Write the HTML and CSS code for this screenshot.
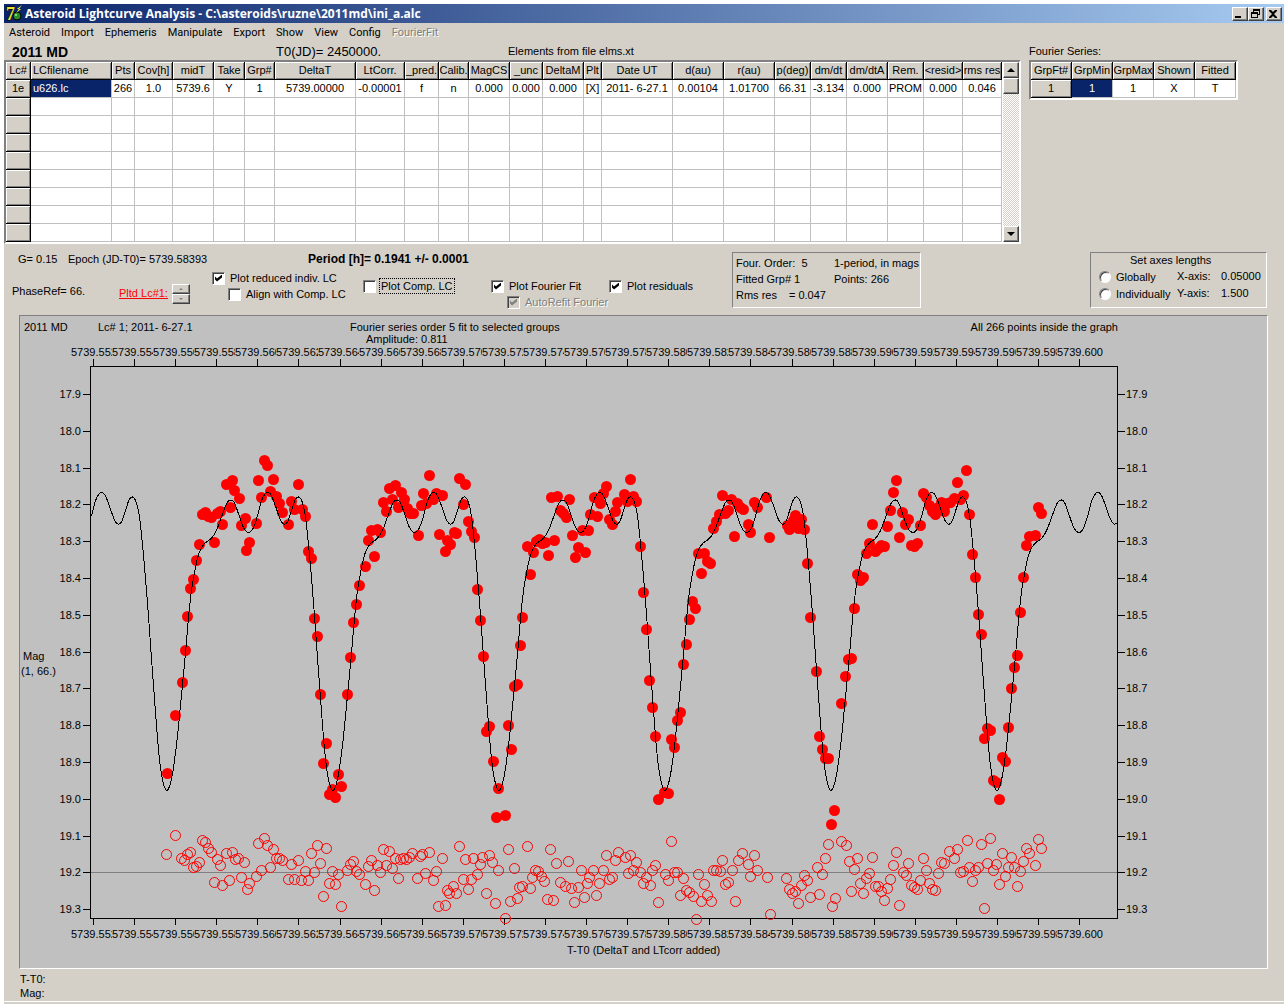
FILE: index.html
```html
<!DOCTYPE html>
<html lang="en">
<head>
  <meta charset="UTF-8">
  <title>Asteroid Lightcurve Analysis</title>
  <link rel="stylesheet" href="styles.css">
</head>
<body>
  <div class="window">
    <header class="titlebar">
      <svg class="app-icon" viewBox="0 0 18 18" width="18" height="18">
        <text class="icon-seven" x="1" y="15">7</text>
        <circle cx="12" cy="11" r="4" fill="#2a8c2a" stroke="#000"/>
        <circle cx="11" cy="10" r="1" fill="#8f8"/>
        <path d="M17 0l-5 4h2l-3 4 5-4h-2z" fill="#ffff30"/>
      </svg>
      <h1>Asteroid Lightcurve Analysis - C:\asteroids\ruzne\2011md\ini_a.alc</h1>
      <div class="caption-buttons">
        <button aria-label="Minimize"><svg viewBox="0 0 12 10" width="12" height="10"><path d="M2 8h6v2H2z"/></svg></button>
        <button aria-label="Restore"><svg viewBox="0 0 12 10" width="12" height="10"><path d="M4 1h7v6H9V6h1V3H5v1H4zM2 4h7v6H2zM3 6v3h5V6z" fill-rule="evenodd"/></svg></button>
        <button class="close" aria-label="Close"><svg viewBox="0 0 12 10" width="12" height="10"><path d="M2 2h2l2 2 2-2h2v1L7 6l3 3v1H8L6 8l-2 2H2V9l3-3-3-3z"/></svg></button>
      </div>
    </header>

    <nav class="menu">
      <button>Asteroid</button>
      <button>Import</button>
      <button>Ephemeris</button>
      <button>Manipulate</button>
      <button>Export</button>
      <button>Show</button>
      <button>View</button>
      <button>Config</button>
      <button disabled>FourierFit</button>
    </nav>

    <div class="tables">
      <section class="lc-section">
        <div class="lc-head">
          <b class="object">2011 MD</b>
          <span class="epoch0">T0(JD)= 2450000.</span>
          <span>Elements from file elms.xt</span>
        </div>
        <div class="sunken">
          <table id="lcTable" class="grid">
            <thead><tr></tr></thead>
            <tbody></tbody>
          </table>
          <div class="scrollbar">
            <button aria-label="Scroll up"><i class="up"></i></button>
            <div class="thumb"></div>
            <div class="track"></div>
            <button aria-label="Scroll down"><i class="down"></i></button>
          </div>
        </div>
      </section>

      <section class="fs-section">
        <div class="fs-head">Fourier Series:</div>
        <div class="sunken">
          <table class="grid fs">
            <thead>
              <tr><th>GrpFt#</th><th>GrpMin</th><th>GrpMax</th><th>Shown</th><th>Fitted</th></tr>
            </thead>
            <tbody>
              <tr><th>1</th><td class="selected">1</td><td>1</td><td>X</td><td>T</td></tr>
            </tbody>
          </table>
        </div>
      </section>
    </div>

    <div class="controls">
      <div class="options">
        <div class="params">
          <span>G= 0.15</span>
          <span>Epoch (JD-T0)= 5739.58393</span>
          <b>Period [h]= 0.1941 +/- 0.0001</b>
        </div>
        <div class="checks">
          <span class="phase">PhaseRef= 66.</span>
          <div class="plotted">
            <a href="#">Pltd Lc#1:</a>
            <div class="spinner">
              <button aria-label="Next"><i class="up"></i></button>
              <button aria-label="Previous"><i class="down"></i></button>
            </div>
          </div>
          <div class="check-col high">
            <label><input type="checkbox" checked><span>Plot reduced indiv. LC</span></label>
            <label class="indent"><input type="checkbox"><span>Align with Comp. LC</span></label>
          </div>
          <div class="check-col">
            <label><input type="checkbox"><span class="focused">Plot Comp. LC</span></label>
          </div>
          <div class="check-col">
            <label><input type="checkbox" checked><span>Plot Fourier Fit</span></label>
            <label class="indent"><input type="checkbox" checked disabled><span>AutoRefit Fourier</span></label>
          </div>
          <div class="check-col">
            <label><input type="checkbox" checked><span>Plot residuals</span></label>
          </div>
        </div>
      </div>

      <div class="panel fit-info">
        <span>Four. Order:&nbsp; 5</span><span>1-period, in mags</span>
        <span>Fitted Grp# 1</span><span>Points: 266</span>
        <span class="rms">Rms res <em>= 0.047</em></span>
      </div>

      <div class="panel axes">
        <div class="axes-title">Set axes lengths</div>
        <label><input type="radio" name="axes"><span>Globally</span></label>
        <span>X-axis:</span><span>0.05000</span>
        <label><input type="radio" name="axes"><span>Individually</span></label>
        <span>Y-axis:</span><span>1.500</span>
      </div>
    </div>

    <div class="chart">
      <svg id="plot" viewBox="20 316 1247 652">
        <text x="24" y="331">2011 MD</text>
        <text x="98" y="331">Lc# 1; 2011- 6-27.1</text>
        <text x="350" y="331">Fourier series order 5 fit to selected groups</text>
        <text x="366" y="343">Amplitude: 0.811</text>
        <text x="1118" y="331" class="end">All 266 points inside the graph</text>
        <text x="23" y="660">Mag</text>
        <text x="21" y="675">(1, 66.)</text>
        <text x="567" y="954">T-T0 (DeltaT and LTcorr added)</text>
        <g id="axes"></g>
        <g id="residuals"></g>
        <g id="points"></g>
        <path id="fit"></path>
      </svg>
    </div>

    <footer class="status">
      <div>T-T0:</div>
      <div>Mag:</div>
    </footer>
  </div>

  <script src="script.js"></script>
</body>
</html>
```
FILE: styles.css
```css
* {
  box-sizing: border-box;
}
body {
  margin: 0;
  padding: 4px 4px 0;
  background: #fff;
  color: #000;
  font: 11px/14px "Liberation Sans", Arial, sans-serif;
}
.window {
  background: #d4d0c8;
  border-bottom: 2px solid #d4d0c8;
}
button {
  padding: 0;
  color: inherit;
  font: inherit;
}

/* title bar */
.titlebar {
  display: flex;
  align-items: center;
  height: 19px;
  padding: 0 2px 0 1px;
  background: linear-gradient(to right, #0a246a, #a6caf0);
  color: #fff;
}
.icon-seven {
  font: bold 18px "Liberation Serif", serif;
  fill: #e8e030;
  stroke: #000;
  stroke-width: 1px;
  paint-order: stroke;
}
.titlebar h1 {
  flex: 1;
  margin: 0 0 0 2px;
  font: bold 12px/18px "Open Sans", Tahoma, sans-serif;
}
.caption-buttons {
  display: flex;
}
.caption-buttons button {
  display: flex;
  width: 16px;
  height: 14px;
  border: 1px solid;
  border-color: #fff #404040 #404040 #fff;
  background: #d4d0c8;
  box-shadow: inset -1px -1px #808080;
}
.caption-buttons .close {
  margin-left: 2px;
}

/* menu */
.menu {
  display: flex;
  gap: 11px;
  height: 20px;
  padding-left: 5px;
}
.menu button {
  border: 0;
  background: none;
  font: 11px/20px Roboto, Tahoma, sans-serif;
}
.menu button:disabled {
  color: #808080;
  text-shadow: 1px 1px #fff;
}

/* tables */
.tables {
  display: flex;
  gap: 8px;
}
.lc-head {
  display: grid;
  grid-template-columns: 264px 232px 1fr;
  height: 17px;
  padding-left: 8px;
  line-height: 16px;
}
.object {
  font-size: 14px;
  line-height: 18px;
}
.epoch0 {
  font-size: 13px;
  line-height: 18px;
}
.fs-head {
  height: 17px;
  line-height: 16px;
}
.sunken {
  display: flex;
  border: 2px solid;
  border-color: #808080 #fff #fff #808080;
  background: #fff;
}
.grid {
  table-layout: fixed;
  border-spacing: 0;
  width: 996px;
}
.grid.fs {
  width: 205px;
}
.grid tr {
  height: 18px;
}
.grid th, .grid td {
  padding: 0;
  border: solid #c0c0c0;
  border-width: 0 1px 1px 0;
  font-weight: normal;
  line-height: 17px;
  text-align: center;
  white-space: nowrap;
  overflow: hidden;
}
.grid th {
  border-color: #000;
  background: #d4d0c8;
  box-shadow: inset 1px 1px #fff, inset -1px -1px #808080;
}
.grid .left {
  padding-left: 2px;
  text-align: left;
}
.grid .selected {
  background: #0a246a;
  color: #fff;
}
.scrollbar {
  display: flex;
  flex-direction: column;
  width: 16px;
  margin-left: 1px;
}
.scrollbar button, .thumb, .spinner button {
  display: flex;
  align-items: center;
  justify-content: center;
  height: 16px;
  border: 1px solid;
  border-color: #fff #404040 #404040 #fff;
  background: #d4d0c8;
  box-shadow: inset -1px -1px #808080;
}
.track {
  flex: 1;
  background: repeating-conic-gradient(#fff 0 25%, #d4d0c8 0 50%) 0 0 / 2px 2px;
}
.up, .down {
  border: 4px solid transparent;
  border-top-width: 0;
  border-bottom-color: #000;
}
.down {
  border-width: 4px 4px 0;
  border-top-color: #000;
}

/* controls */
.controls {
  display: flex;
  height: 71px;
  padding: 8px 17px 7px 8px;
}
.params {
  display: flex;
  height: 18px;
  padding-left: 6px;
}
.params span:first-child {
  width: 50px;
}
.params span {
  width: 240px;
}
.params b {
  font-size: 12px;
}
.checks {
  display: grid;
  grid-template-columns: 107px 93px 151px 128px 118px 123px;
}
.phase {
  padding-top: 14px;
}
.plotted {
  display: flex;
  gap: 4px;
  padding-top: 14px;
}
.plotted a {
  padding-top: 2px;
  color: #f00;
}
.spinner button {
  width: 18px;
  height: 10px;
}
.spinner .up, .spinner .down {
  border-left-width: 2px;
  border-right-width: 2px;
  border-bottom-color: #808080;
}
.spinner .up {
  border-bottom-width: 2px;
}
.spinner .down {
  border-top: 2px solid #808080;
}
.check-col {
  padding-top: 8px;
}
.check-col.high {
  padding-top: 0;
}
.check-col label {
  display: flex;
  align-items: center;
  gap: 4px;
  height: 16px;
  white-space: nowrap;
}
.check-col .indent {
  margin-left: 16px;
}
.check-col span {
  padding: 0 1px;
}
.check-col .focused {
  outline: 1px dotted #000;
}
input {
  appearance: none;
  flex: none;
  margin: 0;
  width: 13px;
  height: 13px;
  border: 1px solid;
  border-color: #808080 #fff #fff #808080;
  background: #fff;
  box-shadow: inset 1px 1px #404040;
}
input:checked::before {
  content: "";
  display: block;
  width: 7px;
  height: 7px;
  margin: 2px;
  background: #000;
  clip-path: polygon(0 2px, 2px 4px, 7px 0, 7px 3px, 2px 7px, 0 5px);
}
input:disabled {
  background: #d4d0c8;
}
input:disabled::before {
  background: #808080;
}
input:disabled + span {
  color: #808080;
  text-shadow: 1px 1px #fff;
}
input[type="radio"] {
  width: 12px;
  height: 12px;
  border-radius: 50%;
}
.panel {
  height: 56px;
  border: 1px solid;
  border-color: #808080 #fff #fff #808080;
  white-space: nowrap;
}
.fit-info {
  display: grid;
  grid-template-columns: 98px 1fr;
  grid-auto-rows: 16px;
  width: 189px;
  padding: 3px 0 0 3px;
}
.rms {
  display: flex;
}
.rms em {
  padding-left: 12px;
  font-style: normal;
}
.axes {
  display: grid;
  grid-template-columns: 78px 44px 1fr;
  grid-template-rows: 15px 17px 17px;
  width: 177px;
  margin-left: auto;
  padding-left: 8px;
  line-height: 16px;
}
.axes-title {
  grid-column: 1 / 4;
  padding-left: 31px;
  line-height: 14px;
}
.axes label {
  display: flex;
  align-items: center;
  gap: 5px;
}

/* chart */
.chart {
  margin: 0 16px 0 15px;
  border: 1px solid;
  border-color: #808080 #fff #fff #808080;
  background: #c0c0c0;
}
.chart svg {
  display: block;
  width: 100%;
}
.chart .end {
  text-anchor: end;
}
.axis {
  fill: none;
  stroke: #000;
  shape-rendering: crispEdges;
}
.zero {
  stroke: #808080;
  shape-rendering: crispEdges;
}
.label-bg {
  fill: #c0c0c0;
}
#points {
  fill: #f00;
}
#residuals {
  fill: none;
  stroke: #f00;
}
#fit {
  fill: none;
  stroke: #000;
  shape-rendering: crispEdges;
}

.status {
  height: 33px;
  padding: 3px 16px;
  border-bottom: 1px solid #fff;
}
```
FILE: script.js
```js
// Lightcurve table: [header, value, column width]
const columns = [
  ['Lc#', '1e', 25], ['LCfilename', 'u626.lc', 81], ['Pts', '266', 23], ['Cov[h]', '1.0', 38],
  ['midT', '5739.6', 41], ['Take', 'Y', 31], ['Grp#', '1', 30], ['DeltaT', '5739.00000', 81],
  ['LtCorr.', '-0.00001', 49], ['_pred.', 'f', 34], ['Calib.', 'n', 30], ['MagCS', '0.000', 41],
  ['_unc', '0.000', 33], ['DeltaM', '0.000', 41], ['Plt', '[X]', 18], ['Date UT', '2011- 6-27.1', 71],
  ['d(au)', '0.00104', 51], ['r(au)', '1.01700', 51], ['p(deg)', '66.31', 36], ['dm/dt', '-3.134', 36],
  ['dm/dtA', '0.000', 41], ['Rem.', 'PROM', 36], ['<resid>', '0.000', 39], ['rms res', '0.046', 39]
];

function fillTable() {
  const head = document.querySelector('#lcTable thead tr');
  const body = document.querySelector('#lcTable tbody');
  columns.forEach(([name, , width], i) => {
    const th = document.createElement('th');
    th.textContent = name;
    th.style.width = width + 'px';
    if (i === 1) th.className = 'left';
    head.appendChild(th);
  });
  for (let r = 0; r < 9; r++) {
    const row = document.createElement('tr');
    columns.forEach(([, value], i) => {
      const cell = document.createElement(i === 0 ? 'th' : 'td');
      if (r === 0) {
        cell.textContent = value;
        if (i === 1) cell.className = 'left selected';
      }
      row.appendChild(cell);
    });
    body.appendChild(row);
  }
}

// Measured points, x,y pairs in plot units
const observed = `167,773 175,715 182,682 185,650 187,616 190,588 193,579 196,560 199,544 202,514 205,512 208,516
211,517 214,542 217,513 220,511 222,524 226,484 230,507 232,480 234,490 239,498 241,525 245,518 246,550 249,542
256,523 258,480 261,497 264,460 267,465 270,491 273,479 276,496 279,503 282,512 288,524 291,501 294,509 298,484
302,509 305,516 308,551 311,558 314,618 317,636 320,694 323,763 326,743 329,794 332,789 335,797 338,774 341,786
347,694 350,657 353,622 356,604 359,585 365,566 368,540 371,530 374,556 377,529 380,532 383,502 386,511 389,488
392,499 395,485 398,507 401,492 404,499 407,508 410,513 413,513 418,535 421,505 423,493 426,503 429,475 433,499
436,493 439,534 442,495 445,551 447,540 450,544 454,532 456,533 459,478 463,504 465,484 468,521 471,531 474,537
477,589 480,620 483,656 486,731 489,726 493,761 496,817 498,788 505,815 508,725 511,749 514,686 517,684 520,645
522,617 530,574 527,546 533,552 536,541 539,539 542,543 545,542 548,555 554,540 551,497 557,496 560,510 563,513
566,517 569,499 572,535 575,557 578,547 585,552 582,530 588,530 590,514 594,497 597,516 600,503 603,493 606,486
609,519 612,524 615,511 617,502 624,494 627,501 630,479 633,496 636,501 640,546 643,592 646,629 649,680 652,707
655,736 658,799 664,792 668,793 671,739 674,747 677,720 680,712 683,664 686,644 689,619 692,601 695,608 698,553
701,573 704,553 707,561 710,563 713,528 716,521 719,514 722,495 725,513 728,510 731,499 734,536 737,503 740,507
743,509 748,524 750,532 754,502 757,507 766,497 769,537 787,525 789,529 792,523 795,515 798,528 801,519 804,529
793,520 798,520 807,563 810,617 816,671 819,736 822,749 825,758 828,758 834,810 831,824 841,703 845,676 848,659
851,658 854,608 857,574 860,580 863,577 866,553 869,543 872,524 875,551 878,548 881,545 884,546 887,526 890,510
893,492 896,480 899,537 902,512 905,524 908,519 911,545 914,546 917,543 920,525 923,493 926,497 929,505 932,511
935,514 938,507 941,502 944,511 947,503 950,502 954,498 957,482 960,499 963,495 966,470 969,514 972,554 975,577
978,614 981,634 984,738 987,728 990,730 993,780 996,782 999,799 1002,757 1005,761 1008,727 1011,688 1014,667
1017,655 1020,612 1023,577 1026,545 1029,536 1035,535 1038,507 1041,513`;

const residuals = `166,854 175,835 181,858 184,860 187,854 190,852 193,867 196,866 199,862 202,840 205,842 208,848
211,852 214,882 217,859 220,865 222,885 226,853 229,880 232,852 235,859 238,858 241,877 244,862 247,889 249,883
256,876 258,843 261,870 264,838 267,845 270,867 273,849 276,858 279,858 282,860 288,879 291,864 294,879 298,860
301,880 305,871 308,880 311,853 314,872 317,845 320,863 323,896 326,848 329,883 332,871 335,884 338,874 341,906
347,870 350,864 353,861 356,871 359,874 365,884 368,866 371,860 374,890 377,865 380,872 383,849 386,865 389,851
392,868 395,858 398,878 400,859 403,858 406,859 409,857 412,853 417,878 420,856 422,854 425,873 429,852 433,880
436,871 438,906 442,858 445,905 447,890 449,893 453,886 456,893 459,846 463,879 465,859 468,889 471,879 473,858
477,874 480,864 482,857 486,893 489,855 492,862 495,903 498,870 505,918 508,849 510,901 514,868 517,898 519,887
522,886 527,846 530,888 532,877 535,870 538,871 541,876 544,881 547,899 550,849 553,900 556,863 560,882 565,886
568,861 571,888 574,902 578,887 581,870 584,897 587,883 589,877 593,870 596,895 599,883 603,870 606,855 609,879
612,877 615,860 618,852 625,857 628,873 630,855 633,870 636,862 640,872 643,883 646,877 650,885 652,870 655,865
658,902 665,874 668,880 671,841 674,872 677,872 680,895 683,878 686,890 689,892 693,896 696,919 698,874 701,901
704,884 707,895 711,901 713,870 716,870 720,871 722,860 725,884 728,882 732,870 735,901 738,860 742,853 748,864
750,876 754,855 757,870 767,877 770,914 786,878 789,889 792,893 795,891 798,903 801,885 804,875 807,880 810,897
817,867 819,894 822,874 825,858 828,844 832,906 835,898 841,841 846,845 849,861 851,891 854,869 857,858 860,883
863,893 866,878 869,873 872,857 875,886 878,886 881,891 884,900 887,888 890,879 893,865 896,852 899,905 903,872
906,875 908,863 911,885 914,887 917,889 920,880 923,858 926,870 929,883 932,889 935,890 938,873 941,862 944,863
949,851 954,858 957,849 960,872 963,871 967,840 969,867 972,881 975,870 978,867 981,844 984,908 987,863 990,838
993,870 996,864 999,884 1002,853 1005,876 1008,867 1011,857 1014,867 1017,886 1020,871 1023,861 1026,848
1029,853 1035,865 1038,839 1041,848`;

// One period of the fitted curve: offset from minimum, y
const period = 166.05;
const shape = [
  [0, 790], [5, 776], [10, 740], [12.7, 713], [15.7, 682], [18.7, 650], [21.5, 617], [24.3, 591], [27, 575],
  [29.5, 562], [32.3, 552], [36.7, 544], [45, 537], [50, 528.5], [55, 515], [60, 502.5], [63.7, 499.5],
  [67.3, 502], [71.7, 514], [76.7, 527.5], [81.7, 532], [86, 528], [90, 517], [94.3, 501], [98, 493.5],
  [100.7, 492], [104, 494.5], [108.3, 505], [113.3, 519], [117, 523.5], [120.7, 521], [125, 508.5],
  [128.3, 499], [131.7, 496.5], [135, 501], [138.3, 515], [141.7, 546], [144.7, 580], [147.7, 618],
  [150.7, 660], [153.3, 695], [155.7, 727], [158.3, 757], [161.7, 780]
];

function fitAt(x) {
  const n = shape.length;
  const point = i => {
    const turn = Math.floor(i / n);
    const [dx, y] = shape[i - turn * n];
    return [dx + turn * period, y];
  };
  const phase = (((x - 166.5) % period) + period) % period;
  let i = 0;
  while (point(i + 1)[0] <= phase) i++;
  const [p0, p1, p2, p3] = [point(i - 1), point(i), point(i + 1), point(i + 2)];
  const h = p2[0] - p1[0];
  const t = (phase - p1[0]) / h;
  const m1 = (p2[1] - p0[1]) / (p2[0] - p0[0]) * h;
  const m2 = (p3[1] - p1[1]) / (p3[0] - p1[0]) * h;
  return (2 * t ** 3 - 3 * t ** 2 + 1) * p1[1] + (t ** 3 - 2 * t ** 2 + t) * m1
    + (3 * t ** 2 - 2 * t ** 3) * p2[1] + (t ** 3 - t ** 2) * m2;
}

function drawCircles(id, data, radius) {
  document.getElementById(id).innerHTML = data.split(/\s+/).map(pair => {
    const [x, y] = pair.split(',').map(Number);
    return `<circle cx="${x + 0.5}" cy="${y + 0.5}" r="${radius}"/>`;
  }).join('');
}

function drawAxes() {
  let out = '';
  let ticks = 'M90.5 366.5H1117.5V918.5H90.5Z';

  // Time axis; every label covers the end of the one before it
  for (let i = 0; i <= 24; i++) {
    const x = Math.round(93 + i * 41.09);
    const label = (5739.552 + i * 0.002).toFixed(3);
    ticks += `M${x + 0.5} 359V366M${x + 0.5} 919V925`;
    for (const y of [356, 938]) {
      out += `<rect class="label-bg" x="${x - 22}" y="${y - 10}" width="46" height="12"/>`;
      out += `<text x="${x - 22}" y="${y}">${label}</text>`;
    }
  }

  // Magnitude axis
  for (let i = 0; i <= 14; i++) {
    const y = Math.round(394 + i * 36.8);
    const label = (17.9 + i * 0.1).toFixed(1);
    ticks += `M83 ${y + 0.5}H90M1118 ${y + 0.5}H1125`;
    out += `<text class="end" x="81" y="${y + 4}">${label}</text>`;
    out += `<text x="1126" y="${y + 4}">${label}</text>`;
  }
  out += '<path class="zero" d="M91 872.5H1117"/>';
  out += `<path class="axis" d="${ticks}"/>`;
  document.getElementById('axes').innerHTML = out;
}

function drawFit() {
  const line = [];
  for (let x = 91; x <= 1117; x++) {
    line.push(`${x + 0.5} ${(fitAt(x) + 0.5).toFixed(1)}`);
  }
  document.getElementById('fit').setAttribute('d', 'M' + line.join('L'));
}

fillTable();
drawAxes();
drawCircles('residuals', residuals, 5);
drawCircles('points', observed, 5.5);
drawFit();
```
